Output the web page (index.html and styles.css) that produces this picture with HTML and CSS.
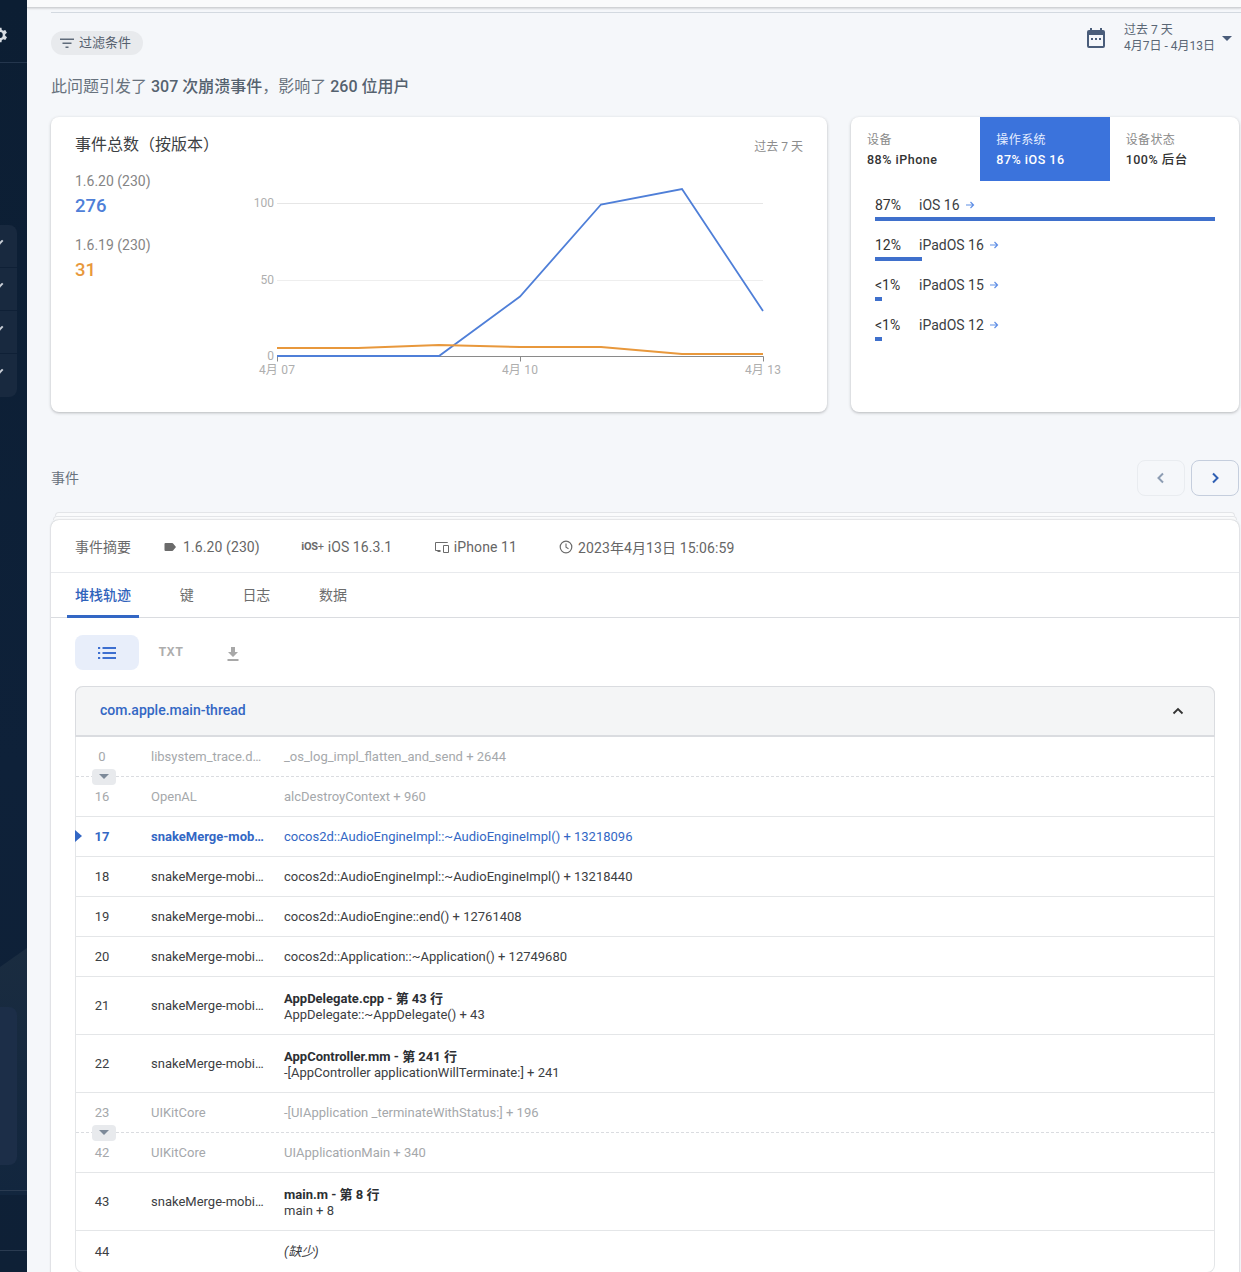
FILE: index.html
```html
<!DOCTYPE html>
<html lang="zh-CN">
<head>
  <meta charset="UTF-8" />
  <title>Crashlytics 问题详情</title>
  <link rel="stylesheet" href="styles.css">
</head>
<body>

  <aside class="sidebar">
    <div class="side-gear">
      <svg width="20" height="20" viewBox="0 0 24 24"><path fill="#d7dce2" d="M19.4 13a7.5 7.5 0 0 0 0-2l2.1-1.6-2-3.4-2.5 1a7.6 7.6 0 0 0-1.7-1L15 3.300h-4l-.4 2.700a7.600 7.600 0 0 0-1.700 1l-2.500-1-2 3.400L6.500 11a7.500 7.500 0 0 0 0 2l-2.100 1.600 2 3.400 2.500-1a7.600 7.600 0 0 0 1.700 1l.4 2.700h4l.4-2.700a7.600 7.600 0 0 0 1.700-1l2.500 1 2-3.400zM13 15.500a3.500 3.500 0 1 1 0-7 3.500 3.500 0 0 1 0 7z"/></svg>
    </div>
    <div class="side-menu">
      <div class="side-item"><span class="side-check"></span></div>
      <div class="side-item"><span class="side-check"></span></div>
      <div class="side-item"><span class="side-check"></span></div>
      <div class="side-item"><span class="side-check"></span></div>
    </div>
    <div class="side-glow"></div>
    <div class="side-promo"></div>
    <div class="side-line"></div>
    <div class="side-line side-line-2"></div>
  </aside>

  <main class="main">
    <div class="topbar"></div>

    <div class="filter-row">
      <div class="chip">
        <svg width="16" height="16" viewBox="0 0 16 16"><path fill="#5f6b7a" d="M1 3.500h14V5H1zM3.500 7.500h9V9h-9zM6.500 11.500h3V13h-3z"/></svg>
        <span class="chip-text">过滤条件</span>
      </div>
      <div class="date-pick">
        <svg width="24" height="24" viewBox="0 0 24 24"><path fill="#4a5d7a" d="M19 4h-1V2h-2v2H8V2H6v2H5a2 2 0 0 0-2 2v14a2 2 0 0 0 2 2h14a2 2 0 0 0 2-2V6a2 2 0 0 0-2-2zm0 16H5V9h14zM7 12h2v2H7zm4 0h2v2h-2zm4 0h2v2h-2z"/></svg>
        <div class="date-text">
          <div>过去 7 天</div>
          <div>4月7日 - 4月13日</div>
        </div>
        <span class="date-caret"></span>
      </div>
    </div>

    <p class="headline">此问题引发了 <b>307</b> <b>次崩溃事件</b>，影响了 <b>260</b> <b>位用户</b></p>

    <div class="cards">
      <section class="card chart-card">
        <div class="chart-head">
          <h2>事件总数（按版本）</h2>
          <span>过去 7 天</span>
        </div>
        <div class="chart-body">
          <div class="legend">
            <div class="legend-item">
              <div class="legend-name">1.6.20 (230)</div>
              <div class="legend-value blue">276</div>
            </div>
            <div class="legend-item">
              <div class="legend-name">1.6.19 (230)</div>
              <div class="legend-value orange">31</div>
            </div>
          </div>
          <svg class="chart" width="550" height="200" viewBox="0 0 550 200">
            <line x1="37" y1="18.500" x2="523" y2="18.500" stroke="#e6e6e6"/>
            <line x1="37" y1="95.500" x2="523" y2="95.500" stroke="#eeeeee"/>
            <path d="M37.500 171.500H523.500M37.500 171.500v5M280.500 171.500v5M523.500 171.500v5" fill="none" stroke="#8a8a8a"/>
            <polyline points="37,171 199,171 280,111.500 361,19.500 442,4 523,126" fill="none" stroke="#4f7fd8" stroke-width="1.800"/>
            <polyline points="37,163 118,163 199,160 280,162 361,162 442,169 523,169" fill="none" stroke="#e8983c" stroke-width="2"/>
            <text class="tick" x="34" y="22" text-anchor="end">100</text>
            <text class="tick" x="34" y="99" text-anchor="end">50</text>
            <text class="tick" x="34" y="175" text-anchor="end">0</text>
            <text class="tick date-tick" x="37" y="189" text-anchor="middle">4月 07</text>
            <text class="tick date-tick" x="280" y="189" text-anchor="middle">4月 10</text>
            <text class="tick date-tick" x="523" y="189" text-anchor="middle">4月 13</text>
          </svg>
        </div>
      </section>

      <section class="card dist-card">
        <div class="dist-tabs">
          <div class="dist-tab">
            <div class="dist-label">设备</div>
            <div class="dist-value">88% iPhone</div>
          </div>
          <div class="dist-tab active">
            <div class="dist-label">操作系统</div>
            <div class="dist-value">87% iOS 16</div>
          </div>
          <div class="dist-tab">
            <div class="dist-label">设备状态</div>
            <div class="dist-value">100% 后台</div>
          </div>
        </div>
        <div class="dist-list">
          <div class="dist-row">
            <div class="dist-line"><span class="dist-pct">87%</span><span>iOS 16</span><svg class="arrow" width="10" height="10" viewBox="0 0 10 10"><path d="M1 5h7.500M5.500 2l3 3-3 3" fill="none" stroke="#5f8fe6" stroke-width="1.200"/></svg></div>
            <div class="dist-bar" style="width: 340px"></div>
          </div>
          <div class="dist-row">
            <div class="dist-line"><span class="dist-pct">12%</span><span>iPadOS 16</span><svg class="arrow" width="10" height="10" viewBox="0 0 10 10"><path d="M1 5h7.500M5.500 2l3 3-3 3" fill="none" stroke="#5f8fe6" stroke-width="1.200"/></svg></div>
            <div class="dist-bar" style="width: 47px"></div>
          </div>
          <div class="dist-row">
            <div class="dist-line"><span class="dist-pct">&lt;1%</span><span>iPadOS 15</span><svg class="arrow" width="10" height="10" viewBox="0 0 10 10"><path d="M1 5h7.500M5.500 2l3 3-3 3" fill="none" stroke="#5f8fe6" stroke-width="1.200"/></svg></div>
            <div class="dist-bar" style="width: 7px"></div>
          </div>
          <div class="dist-row">
            <div class="dist-line"><span class="dist-pct">&lt;1%</span><span>iPadOS 12</span><svg class="arrow" width="10" height="10" viewBox="0 0 10 10"><path d="M1 5h7.500M5.500 2l3 3-3 3" fill="none" stroke="#5f8fe6" stroke-width="1.200"/></svg></div>
            <div class="dist-bar" style="width: 7px"></div>
          </div>
        </div>
      </section>
    </div>

    <div class="section-head">
      <h3>事件</h3>
      <div class="pager">
        <button class="page-btn" disabled>
          <svg width="16" height="16" viewBox="0 0 16 16"><path d="M10 3.500 5.500 8l4.500 4.500" fill="none" stroke="#8d9db3" stroke-width="2"/></svg>
        </button>
        <button class="page-btn next">
          <svg width="16" height="16" viewBox="0 0 16 16"><path d="M6 3.500 10.500 8 6 12.500" fill="none" stroke="#2f5fb3" stroke-width="2"/></svg>
        </button>
      </div>
    </div>

    <div class="edge edge-back"></div>
    <div class="edge edge-mid"></div>

    <section class="event-card">
      <div class="summary">
        <span class="summary-title">事件摘要</span>
        <span class="meta first">
          <svg width="14" height="14" viewBox="0 0 14 14"><path fill="#6b6b6b" d="M2.500 3h6.800a1 1 0 0 1 .8.400L13 7l-2.900 3.600a1 1 0 0 1-.8.400H2.500a1 1 0 0 1-1-1V4a1 1 0 0 1 1-1z"/></svg>
          1.6.20 (230)
        </span>
        <span class="meta"><span class="ios-mark">iOS<i>+</i></span>iOS 16.3.1</span>
        <span class="meta">
          <svg width="16" height="14" viewBox="0 0 16 14"><path fill="none" stroke="#6b6b6b" d="M13.500 3V2.500h-12v8h5M9.500 5.500h5v7h-5zM3.500 11.500h3"/></svg>
          iPhone 11
        </span>
        <span class="meta time">
          <svg width="14" height="14" viewBox="0 0 14 14"><circle cx="7" cy="7" r="5.800" fill="none" stroke="#6b6b6b" stroke-width="1.200"/><path d="M7 3.500V7.300l2.500 1.500" fill="none" stroke="#6b6b6b" stroke-width="1.100"/></svg>
          2023年4月13日 15:06:59
        </span>
      </div>

      <nav class="tabs">
        <a class="tab active">堆栈轨迹</a>
        <a class="tab">键</a>
        <a class="tab">日志</a>
        <a class="tab">数据</a>
      </nav>

      <div class="toolbar">
        <button class="tool active">
          <svg width="20" height="16" viewBox="0 0 20 16"><path fill="#3d6fd0" d="M1 2h2.200v2H1zM5.500 2H19v2H5.500zM1 7h2.200v2H1zM5.500 7H19v2H5.500zM1 12h2.200v2H1zM5.500 12H19v2H5.500z"/></svg>
        </button>
        <button class="tool txt">TXT</button>
        <button class="tool download">
          <svg width="16" height="16" viewBox="0 0 16 16"><path fill="#a8a8a8" d="M6 1h4v5h3L8 11 3 6h3zM2.500 13h11v2h-11z"/></svg>
        </button>
      </div>

      <div class="thread">
        <div class="thread-head">
          <span class="thread-name">com.apple.main-thread</span>
          <svg width="16" height="16" viewBox="0 0 16 16"><path d="M3.500 10.500 8 6l4.500 4.500" fill="none" stroke="#333" stroke-width="1.800"/></svg>
        </div>

        <div class="frame dim dashed"><span class="num">0</span><span class="mod">libsystem_trace.dylib</span><span class="sym">_os_log_impl_flatten_and_send + 2644</span><span class="expand"></span></div>
        <div class="frame dim"><span class="num">16</span><span class="mod">OpenAL</span><span class="sym">alcDestroyContext + 960</span></div>
        <div class="frame hit"><span class="marker"></span><span class="num">17</span><span class="mod">snakeMerge-mobile</span><span class="sym">cocos2d::AudioEngineImpl::~AudioEngineImpl() + 13218096</span></div>
        <div class="frame"><span class="num">18</span><span class="mod">snakeMerge-mobile</span><span class="sym">cocos2d::AudioEngineImpl::~AudioEngineImpl() + 13218440</span></div>
        <div class="frame"><span class="num">19</span><span class="mod">snakeMerge-mobile</span><span class="sym">cocos2d::AudioEngine::end() + 12761408</span></div>
        <div class="frame"><span class="num">20</span><span class="mod">snakeMerge-mobile</span><span class="sym">cocos2d::Application::~Application() + 12749680</span></div>
        <div class="frame tall"><span class="num">21</span><span class="mod">snakeMerge-mobile</span><span class="sym"><b>AppDelegate.cpp - 第 43 行</b><br>AppDelegate::~AppDelegate() + 43</span></div>
        <div class="frame tall"><span class="num">22</span><span class="mod">snakeMerge-mobile</span><span class="sym"><b>AppController.mm - 第 241 行</b><br>-[AppController applicationWillTerminate:] + 241</span></div>
        <div class="frame dim dashed"><span class="num">23</span><span class="mod">UIKitCore</span><span class="sym">-[UIApplication _terminateWithStatus:] + 196</span><span class="expand"></span></div>
        <div class="frame dim"><span class="num">42</span><span class="mod">UIKitCore</span><span class="sym">UIApplicationMain + 340</span></div>
        <div class="frame tall"><span class="num">43</span><span class="mod">snakeMerge-mobile</span><span class="sym"><b>main.m - 第 8 行</b><br>main + 8</span></div>
        <div class="frame last"><span class="num">44</span><span class="mod"></span><span class="sym"><em>(缺少)</em></span></div>
      </div>
    </section>
  </main>

</body>
</html>
```

FILE: styles.css
```css
* {
  box-sizing: border-box;
}

html,
body {
  height: 1272px;
  overflow: hidden;
}

body {
  margin: 0;
  display: flex;
  background: #f5f7fa;
  font-family: Roboto, "Noto Sans CJK SC", sans-serif;
  color: #333;
}

/* sidebar */
.sidebar {
  position: relative;
  width: 27px;
  height: 1272px;
  flex-shrink: 0;
  overflow: hidden;
  background: linear-gradient(to bottom, #0c1e33 0%, #0e2139 60%, #0e2036 100%);
}

.side-gear {
  height: 63px;
  padding: 25px 0 0 0;
  margin-left: -11px;
  border-bottom: 1px solid #24364d;
}

.side-menu {
  width: 17px;
  margin-top: 162px;
  border-radius: 0 8px 8px 0;
  overflow: hidden;
  background: #18293f;
}

.side-item {
  height: 43px;
  padding-top: 15px;
  border-bottom: 1px solid #0f2036;
}

.side-item:last-child {
  border-bottom: none;
}

.side-check {
  display: block;
  width: 9px;
  height: 5px;
  margin-left: -6px;
  border-left: 2px solid #c9ced6;
  border-bottom: 2px solid #c9ced6;
  transform: rotate(-45deg);
}

.side-glow {
  position: absolute;
  left: 0;
  top: 945px;
  width: 27px;
  height: 250px;
  background: linear-gradient(to bottom, #1a2c40, #12263e);
  clip-path: polygon(0 22px, 27px 3px, 27px 100%, 0 100%);
}

.side-promo {
  position: absolute;
  left: 0;
  top: 1007px;
  width: 17px;
  height: 158px;
  border-radius: 0 8px 8px 0;
  background: #1c2e48;
}

.side-line {
  position: absolute;
  left: 0;
  top: 1190px;
  width: 27px;
  border-top: 1px solid #2a3b51;
}

.side-line-2 {
  top: 1250px;
}

/* main column */
.main {
  flex: 1;
  min-width: 0;
  padding: 0 2px 0 24px;
}

.topbar {
  height: 8px;
  margin: 0 -2px 4px -24px;
  background: #f9fafb;
  border-bottom: 1px solid #d0d2d5;
  box-shadow: 0 1px 2px rgba(0, 0, 0, 0.12);
}

.filter-row {
  display: flex;
  justify-content: space-between;
  align-items: flex-start;
  height: 62px;
  margin-right: -2px;
  border-top: 1px solid #d3d9e0;
}

.chip {
  display: flex;
  align-items: center;
  gap: 4px;
  height: 24px;
  margin-top: 18px;
  padding: 0 12px 0 8px;
  border-radius: 12px;
  background: #e8eaed;
  font-size: 13px;
  color: #55606e;
}

.chip-text {
  padding-bottom: 3px;
}

.date-pick {
  display: flex;
  align-items: flex-start;
  margin-top: 10px;
  padding-right: 9px;
  color: #5a6675;
  font-size: 12px;
  line-height: 15.500px;
}

.date-pick svg {
  margin: 3px 16px 0 0;
}

.date-caret {
  width: 0;
  height: 0;
  margin: 13px 0 0 7px;
  border-left: 5px solid transparent;
  border-right: 5px solid transparent;
  border-top: 5px solid #4a5d7a;
}

.headline {
  margin: 0;
  height: 43px;
  padding-top: 1px;
  font-size: 16px;
  line-height: 24px;
  color: #68727d;
}

.headline b {
  font-weight: 500;
  color: #55626f;
}

/* top cards */
.cards {
  display: flex;
  gap: 24px;
}

.card {
  height: 295px;
  border-radius: 8px;
  background: #fff;
  box-shadow: 0 1px 3px rgba(60, 64, 67, 0.35);
}

.chart-card {
  width: 776px;
  padding: 15px 24px 0;
}

.chart-head {
  display: flex;
  justify-content: space-between;
  align-items: center;
  height: 22px;
}

.chart-head h2 {
  margin: 0;
  font-size: 16px;
  font-weight: 400;
  letter-spacing: 0;
  color: #3c4043;
}

.chart-head span {
  font-size: 12px;
  color: #8d8d8d;
  padding-top: 4px;
}

.chart-body {
  display: flex;
}

.legend {
  width: 165px;
  padding-top: 17px;
}

.legend-item {
  height: 64px;
}

.legend-name {
  font-size: 14px;
  line-height: 20px;
  color: #858585;
}

.legend-value {
  margin-top: 1px;
  font-size: 18.500px;
  font-weight: 500;
  line-height: 28px;
}

.blue {
  color: #4f7fd8;
}

.orange {
  color: #e8983c;
}

.chart {
  display: block;
  margin-top: 31px;
}

.tick {
  font-family: Roboto, "Noto Sans CJK SC", sans-serif;
  font-size: 12px;
  fill: #aeaeae;
}

.date-tick {
  letter-spacing: 0.2px;
}

.dist-card {
  width: 388px;
  overflow: hidden;
}

.dist-tabs {
  display: flex;
  height: 64px;
}

.dist-tab {
  width: 129.500px;
  padding: 15px 16px 0;
}

.dist-tab.active {
  background: #3b73dc;
  color: #fff;
}

.dist-label {
  font-size: 12px;
  line-height: 16px;
  letter-spacing: 0.4px;
  color: #8a8a8a;
}

.dist-tab.active .dist-label {
  color: #e6eeff;
}

.dist-value {
  margin-top: 4px;
  font-size: 12.500px;
  line-height: 16px;
  font-weight: 500;
  letter-spacing: 0.5px;
}

.dist-list {
  padding: 13px 24px 0;
}

.dist-row {
  height: 40px;
}

.dist-line {
  display: flex;
  align-items: center;
  height: 21px;
  margin-bottom: 2px;
  font-size: 14px;
  color: #3c4043;
}

.dist-pct {
  width: 44px;
  font-size: 14px;
  color: #333;
}

.arrow {
  margin-left: 5px;
}

.dist-bar {
  height: 4px;
  background: #3f70cc;
}

/* events */
.section-head {
  display: flex;
  justify-content: space-between;
  align-items: center;
  height: 36px;
  margin-top: 48px;
}

.section-head h3 {
  margin: 0;
  padding-bottom: 2px;
  font-size: 14px;
  font-weight: 400;
  color: #68727d;
}

.pager {
  display: flex;
  gap: 6px;
}

.page-btn {
  display: flex;
  align-items: center;
  justify-content: center;
  width: 48px;
  height: 36px;
  padding: 0;
  border: 1px solid #c5cedd;
  border-radius: 8px;
  background: transparent;
}

.page-btn[disabled] {
  border-color: #e9ecf0;
}

.edge {
  height: 4px;
  border: 1px solid #e3e5e8;
  border-bottom: none;
  border-radius: 8px 8px 0 0;
  background: #fafbfc;
}

.edge-back {
  margin: 16px 4px 0;
}

.edge-mid {
  margin: 0 2px;
}

.event-card {
  height: 760px;
  border-radius: 8px 8px 0 0;
  background: #fff;
  box-shadow: 0 0 2px rgba(60, 64, 67, 0.4);
}

.summary {
  display: flex;
  align-items: center;
  height: 53px;
  padding-left: 24px;
  border-bottom: 1px solid #e8eaed;
  font-size: 14px;
  color: #666;
}

.summary-title {
  color: #6a6a6a;
}

.meta {
  display: flex;
  align-items: center;
  gap: 4px;
  margin-left: 41.500px;
  padding-top: 1px;
  letter-spacing: 0.1px;
}

.meta.first {
  gap: 6px;
  margin-left: 32px;
}

.meta.time {
  gap: 5.500px;
}

.ios-mark {
  font-size: 11px;
  font-weight: 700;
  letter-spacing: -0.3px;
  color: #6b6b6b;
}

.ios-mark i {
  font-style: normal;
  font-weight: 400;
}

.tabs {
  display: flex;
  gap: 32.700px;
  height: 45px;
  padding-left: 16px;
  border-bottom: 1px solid #dadce0;
}

.tab {
  height: 45px;
  padding: 11px 8px 0;
  font-size: 14px;
  color: #6d6d6d;
}

.tab.active {
  color: #2f62bb;
  font-weight: 500;
  border-bottom: 3px solid #3367c4;
  border-radius: 3px 3px 0 0;
}

.toolbar {
  display: flex;
  align-items: center;
  height: 35px;
  margin: 17px 0 16px 24px;
}

.tool {
  display: flex;
  align-items: center;
  justify-content: center;
  width: 64px;
  height: 35px;
  padding: 0;
  border: none;
  border-radius: 8px;
  background: transparent;
}

.tool.active {
  background: #e8eefa;
}

.tool.txt {
  font-family: "Liberation Mono", monospace;
  font-size: 13px;
  font-weight: 700;
  letter-spacing: 0.5px;
  color: #adadad;
}

.tool.download {
  width: 36px;
  margin-left: 12px;
  padding-top: 2px;
}

/* stack frames */
.thread {
  margin: 0 24px;
  border: 1px solid #e4e6e8;
  border-top: none;
  border-radius: 8px;
}

.thread-head {
  display: flex;
  justify-content: space-between;
  align-items: center;
  height: 51px;
  margin: 0 -1px;
  padding: 0 28px 0 24px;
  border: 1px solid #dadce0;
  border-bottom: 2px solid #dadce0;
  border-radius: 8px 8px 0 0;
  background: #f4f5f6;
  font-size: 14px;
  font-weight: 500;
  color: #3367c4;
}

.thread-name {
  padding-bottom: 2px;
}

.frame {
  position: relative;
  display: flex;
  align-items: center;
  height: 40px;
  border-bottom: 1px solid #e4e6e8;
  font-size: 13px;
  line-height: 16px;
  color: #3c4043;
}

.frame.tall {
  height: 58px;
}

.frame.last {
  height: 41px;
  border-bottom: none;
}

.frame.dashed {
  border-bottom: 1px dashed #dadce0;
}

.frame.dim {
  color: #a5a8ab;
}

.frame.hit {
  color: #3367c4;
}

.frame.hit .num,
.frame.hit .mod {
  font-weight: 700;
}

.num {
  width: 75px;
  padding-right: 23px;
  text-align: center;
}

.mod {
  width: 133px;
  padding-right: 20px;
  white-space: nowrap;
  overflow: hidden;
  text-overflow: ellipsis;
}

.tall .sym {
  padding-top: 2px;
}

.sym b {
  font-weight: 700;
  color: #2c2f33;
}

.sym em {
  font-style: italic;
}

.marker {
  position: absolute;
  left: -1px;
  top: 13px;
  width: 0;
  height: 0;
  border-top: 6px solid transparent;
  border-bottom: 6px solid transparent;
  border-left: 7px solid #3367c4;
}

.expand {
  position: absolute;
  left: 16px;
  bottom: -9px;
  width: 24px;
  height: 16px;
  border-radius: 4px;
  background: #e8eaed;
}

.expand::after {
  content: "";
  position: absolute;
  left: 7px;
  top: 5px;
  border-left: 5px solid transparent;
  border-right: 5px solid transparent;
  border-top: 5px solid #7d8a99;
}
```
